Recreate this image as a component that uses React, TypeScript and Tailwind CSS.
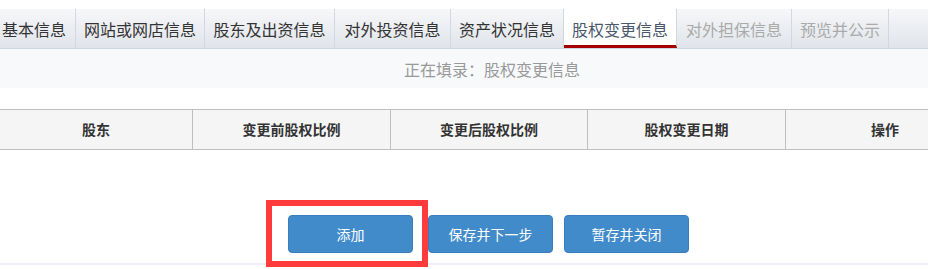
import React from "react";

const TABS: { label: string; w: number; state?: "active" | "disabled" }[] = [
  { label: "基本信息", w: 76 },
  { label: "网站或网店信息", w: 129 },
  { label: "股东及出资信息", w: 130 },
  { label: "对外投资信息", w: 116 },
  { label: "资产状况信息", w: 113 },
  { label: "股权变更信息", w: 113, state: "active" },
  { label: "对外担保信息", w: 115, state: "disabled" },
  { label: "预览并公示", w: 97, state: "disabled" },
];

const COLUMNS: { label: string; w: number }[] = [
  { label: "股东", w: 193 },
  { label: "变更前股权比例", w: 198 },
  { label: "变更后股权比例", w: 197 },
  { label: "股权变更日期", w: 198 },
  { label: "操作", w: 198 },
];

const font = { fontFamily: '"Noto Sans CJK SC", "Noto Sans", sans-serif' };

function Button({ children, className = "" }: { children: React.ReactNode; className?: string }) {
  return (
    <button className={`h-[38px] w-[125px] rounded-[4px] border border-[#3a7dbd] bg-[#428bca] text-[14px] text-white ${className}`}>
      {children}
    </button>
  );
}

export default function App() {
  return (
    <div className="relative h-[269px] w-[935px] overflow-hidden bg-white" style={font}>
      <div className="w-[928px] overflow-hidden">
        <div className="w-[984px] pt-[9px]">
          {/* tab bar */}
          <div className="flex h-[40px] border-b border-[#cdd5e0] bg-gradient-to-b from-[#f6f7f9] to-[#e0e4ea]">
            {TABS.map((t, i) => {
              const active = t.state === "active";
              const disabled = t.state === "disabled";
              return (
                <div
                  key={t.label}
                  style={{ width: t.w }}
                  className={`flex h-[39px] shrink-0 items-center border-r border-[#d3d8df] text-[16px] leading-none ${
                    i === 0 ? "justify-start pl-[2px]" : "justify-center"
                  } ${
                    active
                      ? "border-b-[3px] border-b-[#a30000] bg-white pt-[3px] text-[#4a586b]"
                      : disabled
                      ? "text-[#aaaaaa]"
                      : "text-[#333333]"
                  }`}
                >
                  {t.label}
                </div>
              );
            })}
          </div>

          {/* status */}
          <div className="flex h-[39px] items-center justify-center bg-[#f8f9fb] text-[16px] text-[#999999]">
            正在填录：股权变更信息
          </div>

          {/* table header */}
          <div className="mt-[21px] flex h-[41px] border-y border-[#bfbfbf] bg-[#f5f5f5]">
            {COLUMNS.map((c, i) => (
              <div
                key={c.label}
                style={{ width: c.w }}
                className={`flex shrink-0 items-center justify-center text-[14px] font-bold text-[#333333] ${
                  i < COLUMNS.length - 1 ? "border-r border-[#bfbfbf]" : ""
                }`}
              >
                {c.label}
              </div>
            ))}
          </div>

          {/* actions */}
          <div className="mt-[65px] flex pl-[288px]">
            <Button>添加</Button>
            <Button className="ml-[15px]">保存并下一步</Button>
            <Button className="ml-[11px]">暂存并关闭</Button>
          </div>

          <div className="mt-[10px] h-[2px] bg-[#edf0f6]" />
        </div>
      </div>

      {/* annotation box */}
      <div className="absolute left-[266px] top-[200px] h-[67px] w-[162px] border-[6px] border-[#ff3b3b]" />
    </div>
  );
}
